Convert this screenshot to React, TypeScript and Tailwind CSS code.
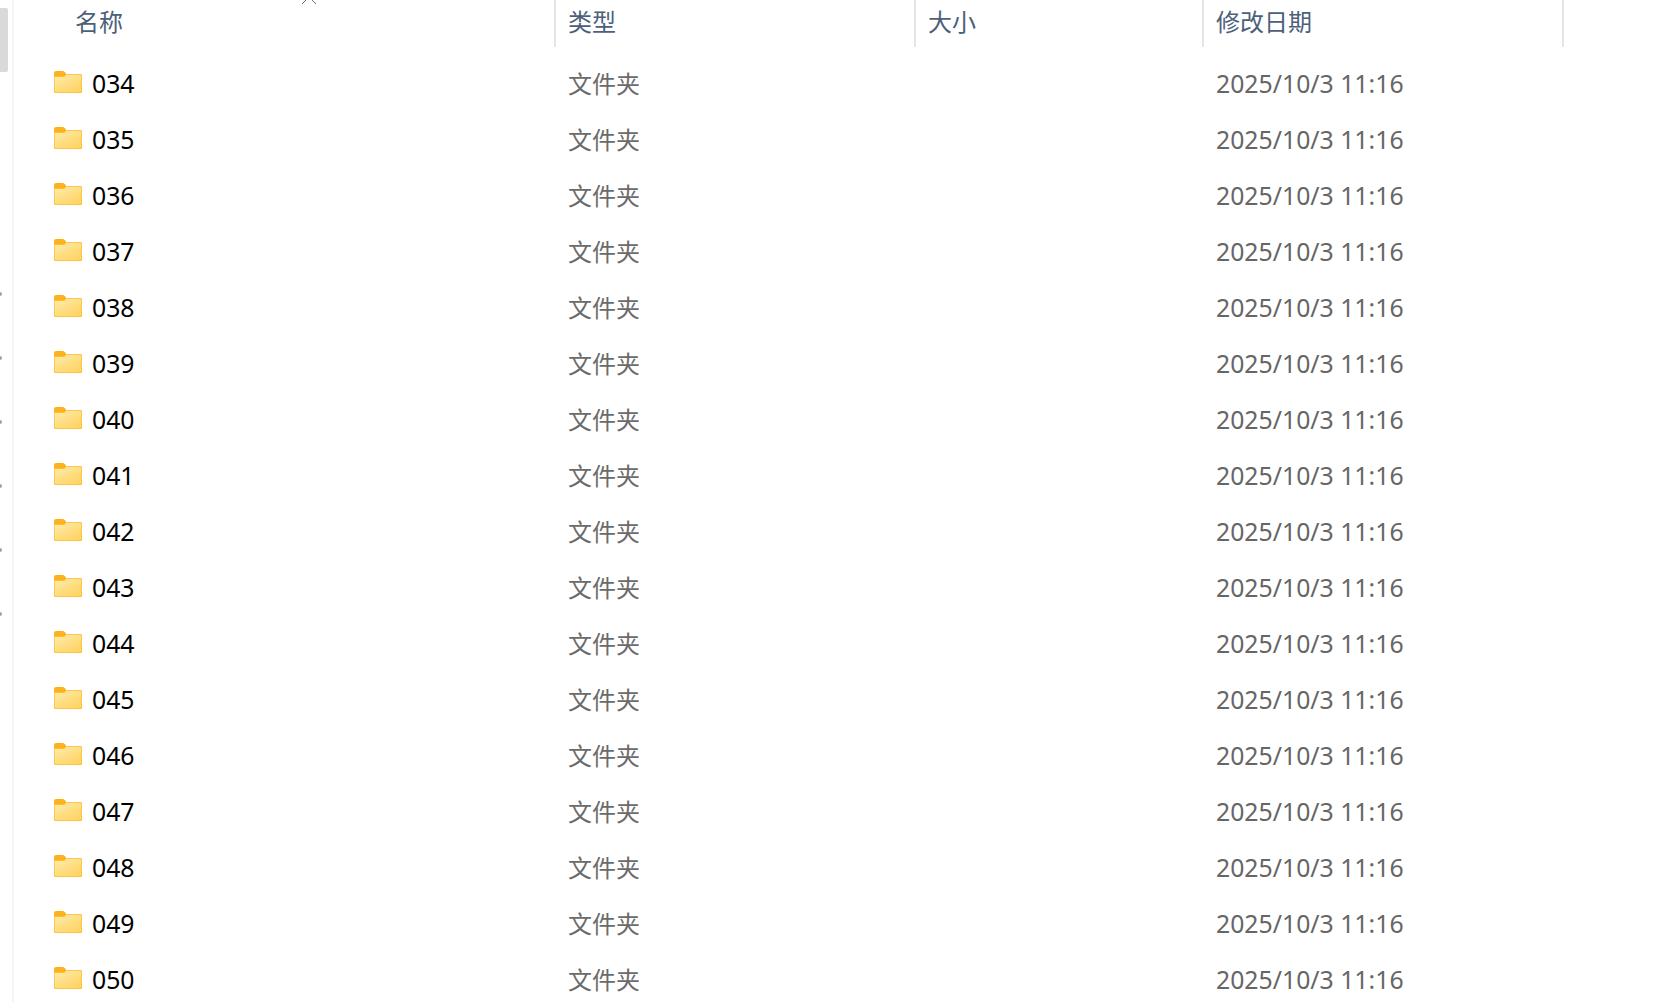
const rows = ['034', '035', '036', '037', '038', '039', '040', '041', '042', '043', '044', '045', '046', '047', '048', '049', '050'];
const dots = [0, 1, 2, 3, 4, 5];

function FolderIcon() {
  return (
    <svg width="28" height="22" viewBox="0 0 28 22" className="shrink-0 -mt-[2px]">
      <defs>
        <linearGradient id="folderFill" x1="0.15" y1="0" x2="0.85" y2="1">
          <stop offset="0" stopColor="#ffeaa8" />
          <stop offset="1" stopColor="#ffd35f" />
        </linearGradient>
      </defs>
      {/* tab */}
      <path d="M0 2a2 2 0 0 1 2-2h6c1.500 0 2.500.6 3.200 1.600L12 3v2.500H0z" fill="#fbb31a" />
      {/* back edge and outline */}
      <path d="M0 5h8.500c1.300 0 2-.5 2.500-1.200L11.500 3H27c.6 0 1 .4 1 1v17c0 .6-.4 1-1 1H1c-.6 0-1-.4-1-1z" fill="#fcbd33" />
      {/* front */}
      <path d="M.7 6h8.300c1.300 0 2.100-.5 2.700-1.300l.7-.9H27c.2 0 .3.100 .3 .3V20.400c0 .6-.3 .9-.8 .9H1.500c-.5 0-.8-.3-.8-.9z" fill="url(#folderFill)" />
    </svg>
  );
}

function HeaderCell({ label, className }: { label: string; className: string }) {
  return (
    <div className={`h-full flex items-center text-[24px] text-[#4c607a] ${className}`}>
      <span className="-mt-[4px]">{label}</span>
    </div>
  );
}

export default function App() {
  return (
    <div
      className="w-[1664px] h-[1002px] overflow-hidden bg-white flex"
      style={{ fontFamily: '"Noto Sans", "Noto Sans CJK SC", sans-serif' }}
    >
      {/* scrollbar strip */}
      <div className="w-[12px] shrink-0 flex flex-col">
        <div className="w-[8px] h-[64px] mt-[8px] bg-[#d9d9d9] rounded-r-[2px]" />
        <div className="mt-[220px] flex flex-col gap-[60px]">
          {dots.map(d => (
            <div key={d} className="w-[2px] h-[4px] rounded-r-full bg-[#9aa3ab]" />
          ))}
        </div>
      </div>
      <div className="w-[2px] shrink-0 bg-[#f5f5f5]" />

      <div className="flex-1 relative">
        {/* sort caret */}
        <svg width="16" height="5" viewBox="0 0 16 5" className="absolute left-[287px] top-0">
          <path d="M1 4 L8 -3 L15 4" fill="none" stroke="#6d6d6d" strokeWidth="1" />
        </svg>

        <div className="flex h-[47px] pl-[41px]">
          <div className="w-[499px] h-full flex items-center pl-[20px] text-[24px] text-[#4c607a]">
            <span className="-mt-[4px]">名称</span>
          </div>
          <HeaderCell label="类型" className="w-[360px] border-l-2 border-[#e5e5e5] pl-[12px]" />
          <HeaderCell label="大小" className="w-[288px] border-l-2 border-[#e5e5e5] pl-[12px]" />
          <HeaderCell label="修改日期" className="w-[362px] border-x-2 border-[#e5e5e5] pl-[12px]" />
        </div>

        <div className="pl-[40px] mt-[8px]">
          {rows.map(name => (
            <div key={name} className="flex items-center h-[56px]">
              <div className="w-[501px] flex items-center gap-[10px]">
                <FolderIcon />
                <span className="text-[24.8px] text-black pt-[2px]">{name}</span>
              </div>
              <div className="w-[360px] pl-[13px] text-[24px] text-[#6b6b6b] pt-[2px]">文件夹</div>
              <div className="w-[288px]" />
              <div className="pl-[13px] pt-[2px] text-[24.8px] text-[#666666]">2025/10/3 11:16</div>
            </div>
          ))}
        </div>
      </div>
    </div>
  );
}
